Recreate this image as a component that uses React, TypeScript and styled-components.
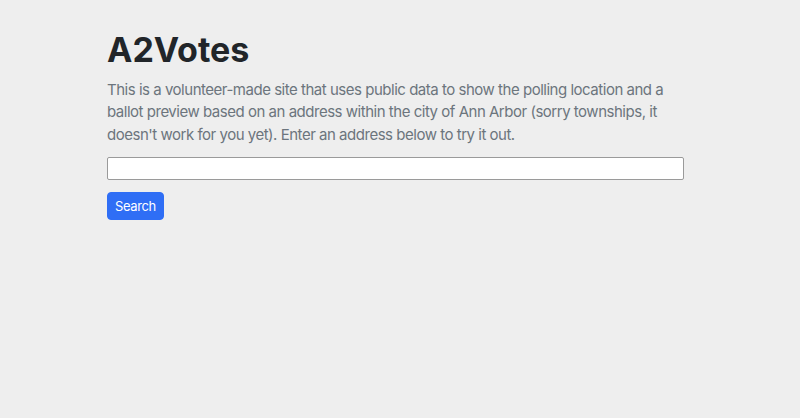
import React from "react";
import styled, { createGlobalStyle } from "styled-components";

const Global = createGlobalStyle`
  html, body { margin: 0; padding: 0; background: #eeeeee; }
  body { font-family: Inter, "Noto Sans", sans-serif; color: #212529; }
`;

const Page = styled.main`
  width: 577px;
  padding: 30px 0 0 107px;
`;

const Title = styled.h1`
  margin: 0 0 8px;
  font-size: 34px;
  font-weight: 700;
  line-height: 1.2;
  color: #212529;
`;

const Lead = styled.p`
  margin: 0 0 11px;
  font-size: 15px;
  line-height: 22.5px;
  letter-spacing: -0.48px;
  color: #6c757d;
`;

const Form = styled.form`
  display: flex;
  flex-direction: column;
  align-items: flex-start;
  gap: 12px;
`;

const Input = styled.input`
  box-sizing: border-box;
  width: 577px;
  height: 23px;
  margin: 0;
  border: 1px solid #9a9a9a;
  border-radius: 2px;
  background: #fff;
  font-family: inherit;
  font-size: 13px;
  padding: 1px 4px;
`;

const Button = styled.button`
  box-sizing: border-box;
  height: 28px;
  padding: 0 7px;
  border: 1px solid #2f6ef5;
  border-radius: 4px;
  background: #2f6ef5;
  color: #fff;
  font-family: inherit;
  font-size: 13px;
  letter-spacing: -0.4px;
  line-height: 26px;
  cursor: pointer;
`;

export default function App() {
  return (
    <>
      <Global />
      <Page>
        <Title>A2Votes</Title>
        <Lead>
          This is a volunteer-made site that uses public data to show the polling location and a
          ballot preview based on an address within the city of Ann Arbor (sorry townships, it
          doesn't work for you yet). Enter an address below to try it out.
        </Lead>
        <Form onSubmit={(e) => e.preventDefault()}>
          <Input type="text" />
          <Button type="submit">Search</Button>
        </Form>
      </Page>
    </>
  );
}
